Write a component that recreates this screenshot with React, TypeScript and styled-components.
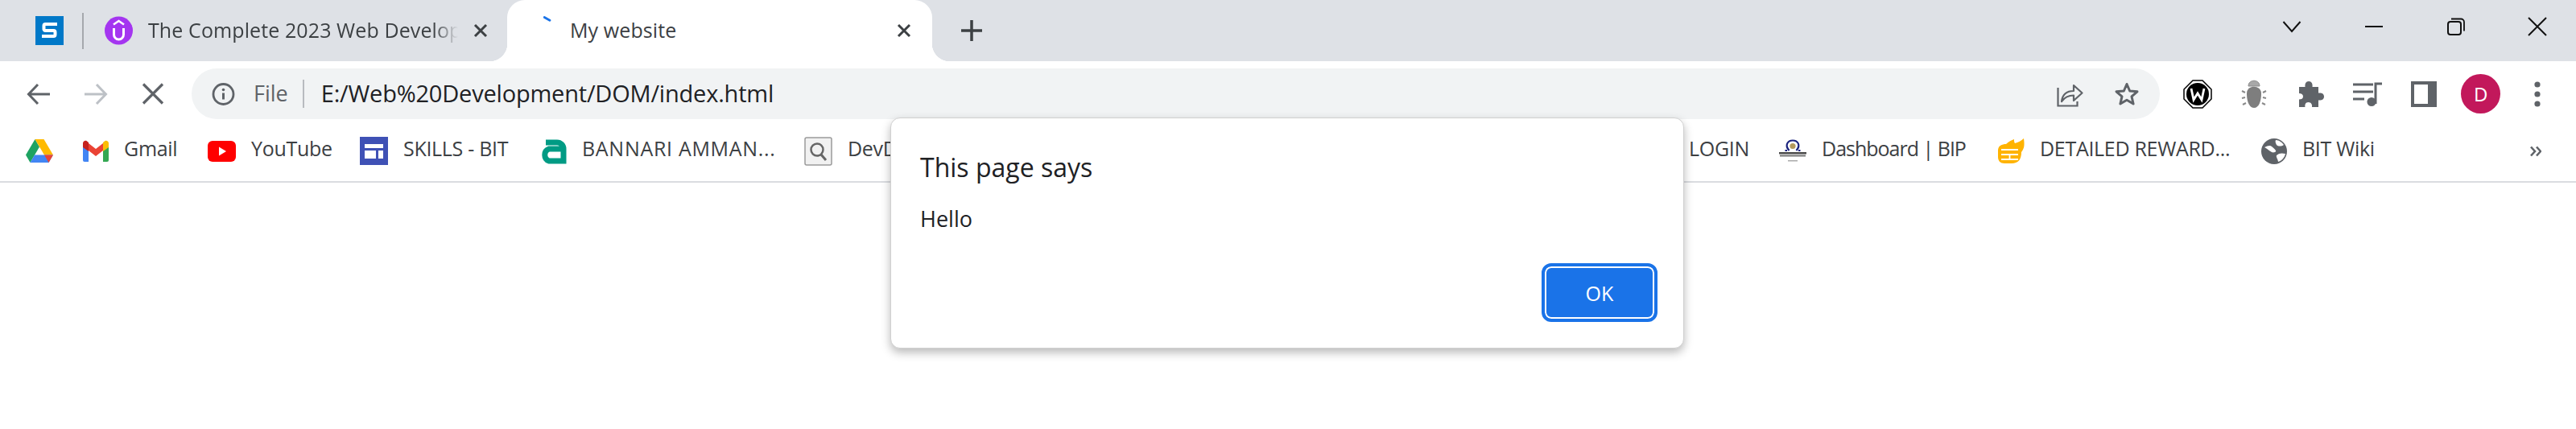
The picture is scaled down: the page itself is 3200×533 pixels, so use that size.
import React from "react";
import styled, { createGlobalStyle } from "styled-components";

const GlobalStyle = createGlobalStyle`
    html, body {
        margin: 0;
        background: #fff;
        overflow: hidden;
    }
    * {
        box-sizing: border-box;
    }
`;

const FONT = `"Open Sans", "Noto Sans", "Liberation Sans", sans-serif`;

export default function App() {
    return (
        <Page>
            <GlobalStyle />
            <TabStrip>
                <PinnedTab>
                    <svg width="35" height="36" viewBox="0 0 35 36">
                        <rect width="35" height="36" fill="#0078c8" />
                        <path d="M27 10H12.500a2 2 0 0 0-2 2v3.500a2 2 0 0 0 2 2.500h10a2 2 0 0 1 2 2v3a2 2 0 0 1-2 2H8" fill="none" stroke="#fff" strokeWidth="4" />
                    </svg>
                </PinnedTab>
                <TabDivider />
                <Tab $width={526}>
                    <svg width="35" height="36" viewBox="0 0 35 36">
                        <circle cx="17.500" cy="18" r="17.500" fill="#a435f0" />
                        <path d="M11 10.500 17.500 6 24 10.500" fill="none" stroke="#fff" strokeWidth="2.600" />
                        <path d="M11.500 15v8a6 6 0 0 0 12 0v-8" fill="none" stroke="#fff" strokeWidth="3" />
                    </svg>
                    <TabTitle $fade>The Complete 2023 Web Developm</TabTitle>
                    <TabClose>
                        <svg width="18" height="18" viewBox="0 0 18 18"><path d="M2 2 16 16M16 2 2 16" stroke="#3c4043" strokeWidth="3" /></svg>
                    </TabClose>
                </Tab>
                <ActiveTab>
                    <Spinner>
                        <svg width="12" height="9" viewBox="0 0 12 9"><path d="M1.500 2 9.500 6.500" stroke="#1a73e8" strokeWidth="3.500" strokeLinecap="round" /></svg>
                    </Spinner>
                    <TabTitle>My website</TabTitle>
                    <ActiveClose>
                        <svg width="18" height="18" viewBox="0 0 18 18"><path d="M2 2 16 16M16 2 2 16" stroke="#3c4043" strokeWidth="3" /></svg>
                    </ActiveClose>
                </ActiveTab>
                <NewTab>
                    <svg width="28" height="28" viewBox="0 0 28 28"><path d="M14 1v26M1 14h26" stroke="#3c4043" strokeWidth="3.500" /></svg>
                </NewTab>
                <WindowControls>
                    <WindowButton $width={102}>
                        <svg width="24" height="16" viewBox="0 0 24 16"><path d="M1.500 2 12 14 22.500 2" fill="none" stroke="#111" strokeWidth="2" /></svg>
                    </WindowButton>
                    <WindowButton $width={102}>
                        <svg width="24" height="4" viewBox="0 0 24 4"><path d="M1 2h22" stroke="#111" strokeWidth="2" /></svg>
                    </WindowButton>
                    <WindowButton $width={101}>
                        <svg width="22" height="22" viewBox="0 0 22 22"><rect x="1" y="5" width="16" height="16" rx="3" fill="none" stroke="#111" strokeWidth="2" /><path d="M5 1.500h12a4 4 0 0 1 4 4v11" fill="none" stroke="#111" strokeWidth="1.800" /></svg>
                    </WindowButton>
                    <WindowButton $width={101}>
                        <svg width="24" height="24" viewBox="0 0 24 24"><path d="M1 1 23 23M23 1 1 23" stroke="#111" strokeWidth="2" /></svg>
                    </WindowButton>
                </WindowControls>
            </TabStrip>

            <Toolbar>
                <IconSlot>
                    <svg width="30" height="28" viewBox="0 0 30 28"><path d="M29 14H3M14 2 2.500 14 14 26" fill="none" stroke="#5f6368" strokeWidth="3" /></svg>
                </IconSlot>
                <IconSlot>
                    <svg width="30" height="28" viewBox="0 0 30 28"><path d="M1 14h26M16 2l11.500 12L16 26" fill="none" stroke="#bdc1c6" strokeWidth="3" /></svg>
                </IconSlot>
                <IconSlot>
                    <svg width="28" height="27" viewBox="0 0 28 27"><path d="M2 1.500 26 25.500M26 1.500 2 25.500" stroke="#5f6368" strokeWidth="3.200" /></svg>
                </IconSlot>
                <Omnibox>
                    <svg width="29" height="30" viewBox="0 0 29 30">
                        <circle cx="14.500" cy="15" r="12.500" fill="none" stroke="#5f6368" strokeWidth="2.800" />
                        <path d="M14.500 13.500v8" stroke="#5f6368" strokeWidth="3" />
                        <circle cx="14.500" cy="9.500" r="1.800" fill="#5f6368" />
                    </svg>
                    <Scheme>File</Scheme>
                    <OmniDivider />
                    <Url>E:/Web%20Development/DOM/index.html</Url>
                    <OmniActions>
                        <svg width="33" height="32" viewBox="0 0 33 32">
                            <path d="M1.500 8v22.500h24V25" fill="none" stroke="#5f6368" strokeWidth="2.200" />
                            <path d="M6 25c1-8 6-13 15-13V5l10.500 9.500L21 24v-6.500c-7 0-11 2-15 7.500z" fill="none" stroke="#5f6368" strokeWidth="2.200" strokeLinejoin="round" />
                        </svg>
                        <svg width="32" height="31" viewBox="0 0 32 31">
                            <path d="M16 3.500 19.700 12l9.300.800-7 6.100 2.100 9.100L16 23.200 7.900 28 10 18.900l-7-6.100 9.300-.800z" fill="none" stroke="#5f6368" strokeWidth="3" strokeLinejoin="round" />
                        </svg>
                    </OmniActions>
                </Omnibox>
                <ExtensionSlots>
                    <IconSlot $width={70.3}>
                        <svg width="36" height="36" viewBox="0 0 36 36">
                            <path d="M12 1h12l11 11v12L24 35H12L1 24V12z" fill="#fff" stroke="#000" strokeWidth="1.500" />
                            <circle cx="18" cy="18" r="14" fill="#000" />
                            <path d="M10 11l3 14 5-8 5 8 3-14" fill="none" stroke="#fff" strokeWidth="2.800" />
                        </svg>
                    </IconSlot>
                    <IconSlot $width={70.3}>
                        <svg width="32" height="36" viewBox="0 0 32 36">
                            <path d="M9 8c0-9 14-9 14 0z" fill="#a8a8a8" stroke="#8a8a8a" />
                            <path d="M7 17c0-11 18-11 18 0 0 10-3 18-9 18S7 27 7 17z" fill="#7e7e7e" />
                            <path d="M1 14l4 2M1 23l4-1M2 31l4-2M31 14l-4 2M31 23l-4-1M30 31l-4-2" stroke="#8a8a8a" strokeWidth="2" />
                        </svg>
                    </IconSlot>
                    <IconSlot $width={70.3}>
                        <svg width="32" height="32" viewBox="0 0 32 32">
                            <path d="M1 7h7.500C8 3 9.500 0 13 0s5 3 4.500 7H25v7.500c4-.5 7 .8 7 4.500s-3 5-7 4.500V32H17c.5-3-1-6-4.500-6S8 29 8.500 32H1v-9.500c3 0 5-1 5-3.500s-2-4-5-4z" fill="#5f6368" />
                        </svg>
                    </IconSlot>
                    <IconSlot $width={70.3}>
                        <svg width="36" height="30" viewBox="0 0 36 30">
                            <path d="M0 3h25M0 12h25M0 21h14" stroke="#5f6368" strokeWidth="3" />
                            <path d="M28 27V2h8" fill="none" stroke="#5f6368" strokeWidth="3" />
                            <circle cx="23" cy="24.500" r="5.500" fill="#5f6368" />
                        </svg>
                    </IconSlot>
                    <IconSlot $width={70.3}>
                        <svg width="32" height="32" viewBox="0 0 32 32">
                            <path d="M0 0h32v32H0z" fill="#5f6368" />
                            <path d="M4 4h17v24H4z" fill="#fff" />
                        </svg>
                    </IconSlot>
                    <IconSlot $width={70.3}>
                        <Avatar>D</Avatar>
                    </IconSlot>
                    <IconSlot $width={70.3}>
                        <svg width="8" height="32" viewBox="0 0 8 32">
                            <circle cx="4" cy="4" r="3.600" fill="#5f6368" />
                            <circle cx="4" cy="16" r="3.600" fill="#5f6368" />
                            <circle cx="4" cy="28" r="3.600" fill="#5f6368" />
                        </svg>
                    </IconSlot>
                </ExtensionSlots>
            </Toolbar>

            <BookmarksBar>
                <Bookmark $width={71}>
                    <svg width="34" height="31" viewBox="0 0 34 31">
                        <path d="M11.500 1 0 20.500 5.500 30 17 10.500z" fill="#1ea362" />
                        <path d="M11.500 1h11L34 20.500H23z" fill="#ffba00" />
                        <path d="M5.500 30h23L34 20.500H11z" fill="#4285f4" />
                        <path d="M23 20.500h11L28.500 30z" fill="#ea4335" />
                    </svg>
                </Bookmark>
                <Bookmark $width={155}>
                    <svg width="32" height="28" viewBox="0 0 32 28">
                        <path d="M0 4v21a2 2 0 0 0 2 2h5V13z" fill="#4285f4" />
                        <path d="M25 13v14h5a2 2 0 0 0 2-2V4z" fill="#34a853" />
                        <path d="M7 13 16 20 25 13V4l-9 7-9-7z" fill="#ea4335" />
                        <path d="M0 4v5l7 5V3L4.500 1C2.500 0 0 1.500 0 4z" fill="#c5221f" />
                        <path d="M32 4v5l-7 5V3l2.500-2C29.500 0 32 1.500 32 4z" fill="#fbbc04" />
                    </svg>
                    <BookmarkLabel>Gmail</BookmarkLabel>
                </Bookmark>
                <Bookmark $width={189}>
                    <svg width="35" height="26" viewBox="0 0 35 26">
                        <rect width="35" height="26" rx="6" fill="#f00" />
                        <path d="M14 7.500 23 13l-9 5.500z" fill="#fff" />
                    </svg>
                    <BookmarkLabel>YouTube</BookmarkLabel>
                </Bookmark>
                <Bookmark $width={223}>
                    <svg width="35" height="35" viewBox="0 0 35 35">
                        <rect width="35" height="35" fill="#3f51b5" />
                        <path d="M6 9h23v5H6zM6 17h14v10H6zM23 17h6v10h-6z" fill="#fff" />
                    </svg>
                    <BookmarkLabel>SKILLS - BIT</BookmarkLabel>
                </Bookmark>
                <Bookmark $width={329}>
                    <svg width="34" height="32" viewBox="0 0 34 32">
                        <path d="M8 5h14a8 8 0 0 1 8 8v15H12a8 8 0 0 1 0-15h17" fill="none" stroke="#009b84" strokeWidth="7" />
                    </svg>
                    <BookmarkLabel $tracking={0.7}>BANNARI AMMAN...</BookmarkLabel>
                </Bookmark>
                <Bookmark $width={1099}>
                    <svg width="35" height="36" viewBox="0 0 35 36">
                        <rect x="1" y="1" width="33" height="34" rx="2" fill="#f1f1f1" stroke="#9a9a9a" strokeWidth="1.500" />
                        <circle cx="16" cy="16" r="7.500" fill="none" stroke="#666" strokeWidth="2.500" />
                        <path d="M21 22l6 7" stroke="#666" strokeWidth="3" />
                    </svg>
                    <BookmarkLabel>DevDocs</BookmarkLabel>
                </Bookmark>
                <Bookmark $width={112}>
                    <BookmarkLabel>LOGIN</BookmarkLabel>
                </Bookmark>
                <Bookmark $width={271}>
                    <svg width="34" height="30" viewBox="0 0 34 30">
                        <path d="M10 14H7.500M24 14h2.500M12.500 14C6.500 7 11 1.500 17 1.500S27.500 7 21.500 14" fill="none" stroke="#1a237e" strokeWidth="2.200" />
                        <circle cx="17" cy="8.500" r="3.600" fill="#b49a5c" />
                        <rect x="0" y="16" width="34" height="2.500" fill="#4a4a4a" />
                        <rect x="1" y="19.500" width="32" height="2" fill="#777" />
                        <rect x="11" y="26" width="12" height="1.500" fill="#aaa" />
                    </svg>
                    <BookmarkLabel $tracking={-1}>Dashboard | BIP</BookmarkLabel>
                </Bookmark>
                <Bookmark $width={328}>
                    <svg width="34" height="33" viewBox="0 0 34 33">
                        <path d="M1 16C1 10 6 8 11 8c3-3 7-5 10-6 0 2 0 4 1 5 4-1 8-3 11-6 1 8 1 12-3 17 0 9-4 14-12 14H9c-5 0-8-3-8-8z" fill="#ffb300" />
                        <path d="M5 15h21M5 21h21M5 27h21M15.500 21v6" stroke="#fff" strokeWidth="1.800" />
                    </svg>
                    <BookmarkLabel>DETAILED REWARD...</BookmarkLabel>
                </Bookmark>
                <Bookmark $width={170}>
                    <svg width="32" height="32" viewBox="0 0 32 32">
                        <circle cx="16" cy="16" r="16" fill="#5f6368" />
                        <path d="M4 11c4-2 7-3 9-1s4 3 5 5-3 3-5 2-4-3-9-6zM19 21c3-3 7-3 11-2-1 5-5 9-9 10 0-3-3-6-2-8zM18 2c4 0 8 3 10 6-3 2-7 2-9 0-1-2-2-4-1-6z" fill="#fff" />
                    </svg>
                    <BookmarkLabel>BIT Wiki</BookmarkLabel>
                </Bookmark>
                <MoreBookmarks>
                    <svg width="14" height="14" viewBox="0 0 14 14"><path d="M1 1.500 6 7l-5 5.500M8 1.500 13 7l-5 5.500" fill="none" stroke="#5f6368" strokeWidth="2.600" /></svg>
                </MoreBookmarks>
            </BookmarksBar>

            <Dialog>
                <DialogTitle>This page says</DialogTitle>
                <DialogMessage>Hello</DialogMessage>
                <DialogFooter>
                    <OkButton>OK</OkButton>
                </DialogFooter>
            </Dialog>
        </Page>
    );
}

const Page = styled.div`
    position: relative;
    width: 3200px;
    height: 533px;
    background: #fff;
    font-family: ${FONT};
    color: #3c4043;
    overflow: hidden;
`;

const TabStrip = styled.div`
    display: flex;
    align-items: stretch;
    height: 76px;
    background: #dee1e6;
`;

const PinnedTab = styled.div`
    display: flex;
    align-items: center;
    padding-left: 44px;
    width: 102px;
`;

const TabDivider = styled.div`
    align-self: center;
    width: 2px;
    height: 45px;
    background: #a5a8ad;
`;

const Tab = styled.div<{ $width: number }>`
    display: flex;
    align-items: center;
    gap: 19px;
    width: ${p => p.$width}px;
    padding: 0 24px 0 26px;
`;

const TabTitle = styled.span<{ $fade?: boolean }>`
    flex: 1;
    min-width: 0;
    margin-top: -3px;
    font-size: 25px;
    letter-spacing: 0.1px;
    white-space: nowrap;
    overflow: hidden;
    color: #3c4043;
    ${p => p.$fade && `mask-image: linear-gradient(to right, #000 92%, transparent);`}
`;

const TabClose = styled.span`
    display: flex;
`;

const ActiveTab = styled.div`
    position: relative;
    display: flex;
    align-items: center;
    width: 528px;
    padding: 0 26px 0 45px;
    gap: 23px;
    background: #fff;
    border-radius: 22px 22px 0 0;

    &::before,
    &::after {
        content: "";
        position: absolute;
        bottom: 0;
        width: 22px;
        height: 22px;
    }
    &::before {
        left: -22px;
        background: radial-gradient(circle at 0 0, transparent 22px, #fff 22.500px);
    }
    &::after {
        right: -22px;
        background: radial-gradient(circle at 100% 0, transparent 22px, #fff 22.500px);
    }
`;

const Spinner = styled.span`
    display: flex;
    align-self: flex-start;
    margin-top: 19px;
    width: 10px;
`;

const ActiveClose = styled.span`
    display: flex;
`;

const NewTab = styled.div`
    display: flex;
    align-items: center;
    margin-left: 35px;
    padding-bottom: 1px;
`;

const WindowControls = styled.div`
    display: flex;
    margin-left: auto;
    margin-right: -2px;
`;

const WindowButton = styled.div<{ $width: number }>`
    display: flex;
    align-items: center;
    justify-content: center;
    width: ${p => p.$width}px;
    padding-bottom: 11px;
`;

const Toolbar = styled.div`
    display: flex;
    align-items: center;
    height: 74px;
    padding: 9px 12.900px 2px 12px;
    background: #fff;
`;

const IconSlot = styled.div<{ $width?: number }>`
    display: flex;
    align-items: center;
    justify-content: center;
    flex: none;
    width: ${p => p.$width ?? 71}px;
    height: 63px;
`;

const Omnibox = styled.div`
    display: flex;
    align-items: center;
    flex: 1;
    height: 63px;
    margin: 0 12px 0 13px;
    padding: 0 25px;
    background: #f1f3f4;
    border-radius: 32px;
`;

const Scheme = styled.span`
    margin-left: 23px;
    margin-top: -3px;
    font-size: 27px;
    color: #5f6368;
`;

const OmniDivider = styled.div`
    width: 2px;
    height: 35px;
    margin: 0 21px 0 18px;
    background: #b8bbbf;
`;

const Url = styled.span`
    margin-top: -3px;
    font-size: 29px;
    letter-spacing: -0.2px;
    color: #202124;
    white-space: nowrap;
`;

const OmniActions = styled.div`
    display: flex;
    align-items: center;
    gap: 38px;
    margin-left: auto;
`;

const ExtensionSlots = styled.div`
    display: flex;
    align-items: center;
`;

const Avatar = styled.div`
    display: flex;
    align-items: center;
    justify-content: center;
    width: 49px;
    height: 49px;
    border-radius: 50%;
    background: #c2185b;
    color: #fff;
    font-size: 24px;
`;

const BookmarksBar = styled.div`
    display: flex;
    align-items: center;
    height: 77px;
    padding: 0 43px 0 32px;
    border-bottom: 2px solid #dadce0;
    background: #fff;
`;

const Bookmark = styled.div<{ $width: number }>`
    display: flex;
    align-items: center;
    flex: none;
    gap: 19px;
    width: ${p => p.$width}px;
    white-space: nowrap;
`;

const BookmarkLabel = styled.span<{ $tracking?: number }>`
    margin-top: -7px;
    font-size: 25px;
    letter-spacing: ${p => p.$tracking ?? -0.3}px;
    color: #3c4043;
`;

const MoreBookmarks = styled.div`
    display: flex;
    margin-left: auto;
`;

const Dialog = styled.div`
    position: absolute;
    top: 146px;
    left: 1106px;
    display: flex;
    flex-direction: column;
    width: 986px;
    height: 287px;
    padding: 39px 32px 32px 36px;
    background: #fff;
    border: 1px solid #d0d0d0;
    border-radius: 12px;
    box-shadow: 0 5px 12px rgba(0, 0, 0, 0.28);
    color: #202124;
`;

const DialogTitle = styled.div`
    font-size: 32px;
    line-height: 44px;
`;

const DialogMessage = styled.div`
    margin-top: 23px;
    font-size: 27px;
    line-height: 38px;
`;

const DialogFooter = styled.div`
    display: flex;
    justify-content: flex-end;
    margin-top: auto;
`;

const OkButton = styled.button`
    width: 144px;
    height: 73px;
    padding: 0;
    background: #1a73e8;
    border: 4px solid #1a73e8;
    border-radius: 12px;
    box-shadow: inset 0 0 0 2px #fff;
    color: #fff;
    font-family: ${FONT};
    font-size: 25px;
`;
